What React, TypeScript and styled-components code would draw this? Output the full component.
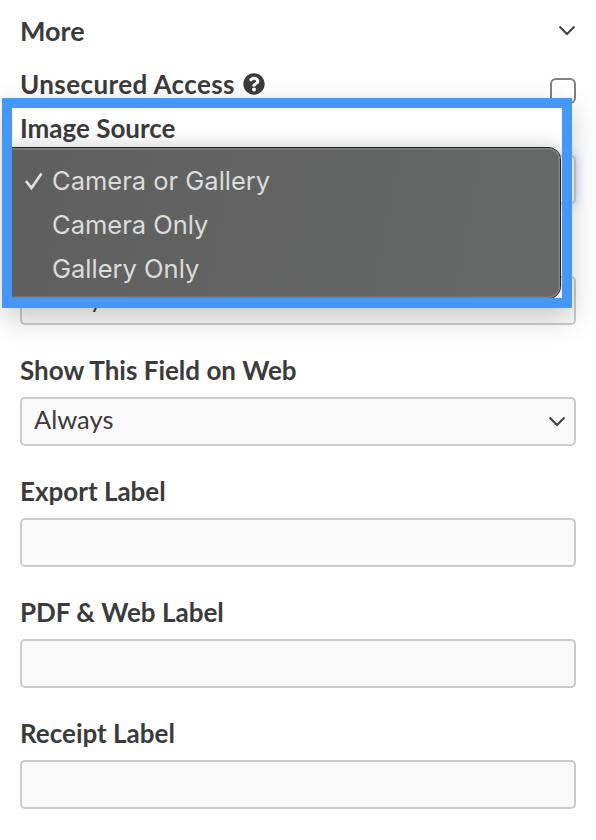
import styled, { createGlobalStyle } from "styled-components";
import { FaQuestionCircle } from "react-icons/fa";

const GlobalStyle = createGlobalStyle`
  html, body {
    margin: 0;
    background: #fff;
  }
`;

const Page = styled.div`
  position: relative;
  width: 596px;
  height: 840px;
  overflow: hidden;
  padding: 14px 20px 0;
  box-sizing: border-box;
  font-family: Lato, "Open Sans", sans-serif;
  color: #3b3b3b;
`;

const Header = styled.div`
  display: flex;
  align-items: center;
  justify-content: space-between;
  height: 32px;
`;

const Title = styled.h2`
  margin: 0;
  font-size: 27px;
  font-weight: 700;
`;

const CheckRow = styled.div`
  display: flex;
  justify-content: space-between;
  margin-top: 24px;
  height: 45px;
`;

const Label = styled.label`
  display: flex;
  align-items: center;
  gap: 8px;
  height: 28px;
  font-size: 26px;
  font-weight: 700;
`;

const CheckLabel = styled(Label)`
  letter-spacing: 0.4px;
`;

const Checkbox = styled.span`
  display: block;
  width: 26px;
  height: 26px;
  margin-top: 8px;
  box-sizing: border-box;
  border: 2px solid #808080;
  border-radius: 6px;
  background: #fff;
`;

const Field = styled.div`
  height: 121px;
`;

const FieldLabel = styled(Label)`
  height: 26px;
  margin-bottom: 14px;
`;

const Box = styled.div<{ $focused?: boolean }>`
  display: flex;
  align-items: center;
  justify-content: space-between;
  height: 49px;
  box-sizing: border-box;
  padding: 0 8px 5px 12px;
  border: 2px solid #cbcbcb;
  border-radius: 5px;
  background: #fafafa;
  font-size: 25.5px;
  box-shadow: ${(p) => (p.$focused ? "0 0 10px rgba(70, 150, 250, 0.45)" : "none")};
`;

const BoxChevron = styled.span`
  display: flex;
  margin-top: 5px;
`;

const Highlight = styled.div`
  position: absolute;
  left: 2px;
  top: 98px;
  width: 570px;
  height: 210px;
  box-sizing: border-box;
  border: 10px solid #4598f8;
  overflow: hidden;
  box-shadow: 0 10px 28px rgba(0, 0, 0, 0.2);
`;

const Menu = styled.ul`
  list-style: none;
  margin: 40px 0 0 -12px;
  padding: 10px 0 0;
  width: 560px;
  height: 150px;
  box-sizing: border-box;
  border-radius: 12px;
  background: linear-gradient(100deg, #5f5f5f, #666767);
  box-shadow: 0 0 0 1px #1f1f1f, inset 0 0 0 1.5px #808080, 0 -3px 18px rgba(0, 0, 0, 0.18);
  font-family: Inter, Roboto, sans-serif;
  font-size: 25.5px;
  color: #dcdcdc;
`;

const MenuItem = styled.li`
  position: relative;
  display: flex;
  align-items: center;
  height: 44px;
  padding-left: 52px;
`;

const Tick = styled.svg`
  position: absolute;
  left: 24px;
  top: 14px;
`;

const Chevron = () => (
  <svg width="18" height="11" viewBox="0 0 18 11" fill="none">
    <path d="M1.5 1.5 9 9 16.5 1.5" stroke="#3f3f3f" strokeWidth="2" />
  </svg>
);

const fields = [
  { id: "source", label: "Image Source", select: true, focused: true },
  { id: "mobile", value: "Always", select: true },
  { id: "web", label: "Show This Field on Web", value: "Always", select: true },
  { id: "export", label: "Export Label" },
  { id: "pdf", label: "PDF & Web Label" },
  { id: "receipt", label: "Receipt Label" },
];

function App() {
  return (
    <Page>
      <GlobalStyle />
      <Header>
        <Title>More</Title>
        <Chevron />
      </Header>
      <CheckRow>
        <CheckLabel>
          Unsecured Access
          <FaQuestionCircle size={22} color="#3b3b3b" />
        </CheckLabel>
        <Checkbox />
      </CheckRow>
      {fields.map((f) => (
        <Field key={f.id}>
          <FieldLabel>{f.label}</FieldLabel>
          <Box $focused={f.focused}>
            {f.value}
            {f.select && (
              <BoxChevron>
                <Chevron />
              </BoxChevron>
            )}
          </Box>
        </Field>
      ))}
      <Highlight>
        <Menu>
          <MenuItem>
            <Tick width="20" height="20" viewBox="0 0 20 20" fill="none">
              <path d="M2 9 7.5 16 17.5 1.5" stroke="#e2e2e2" strokeWidth="2.6" />
            </Tick>
            Camera or Gallery
          </MenuItem>
          <MenuItem>Camera Only</MenuItem>
          <MenuItem>Gallery Only</MenuItem>
        </Menu>
      </Highlight>
    </Page>
  );
}

export default App;
